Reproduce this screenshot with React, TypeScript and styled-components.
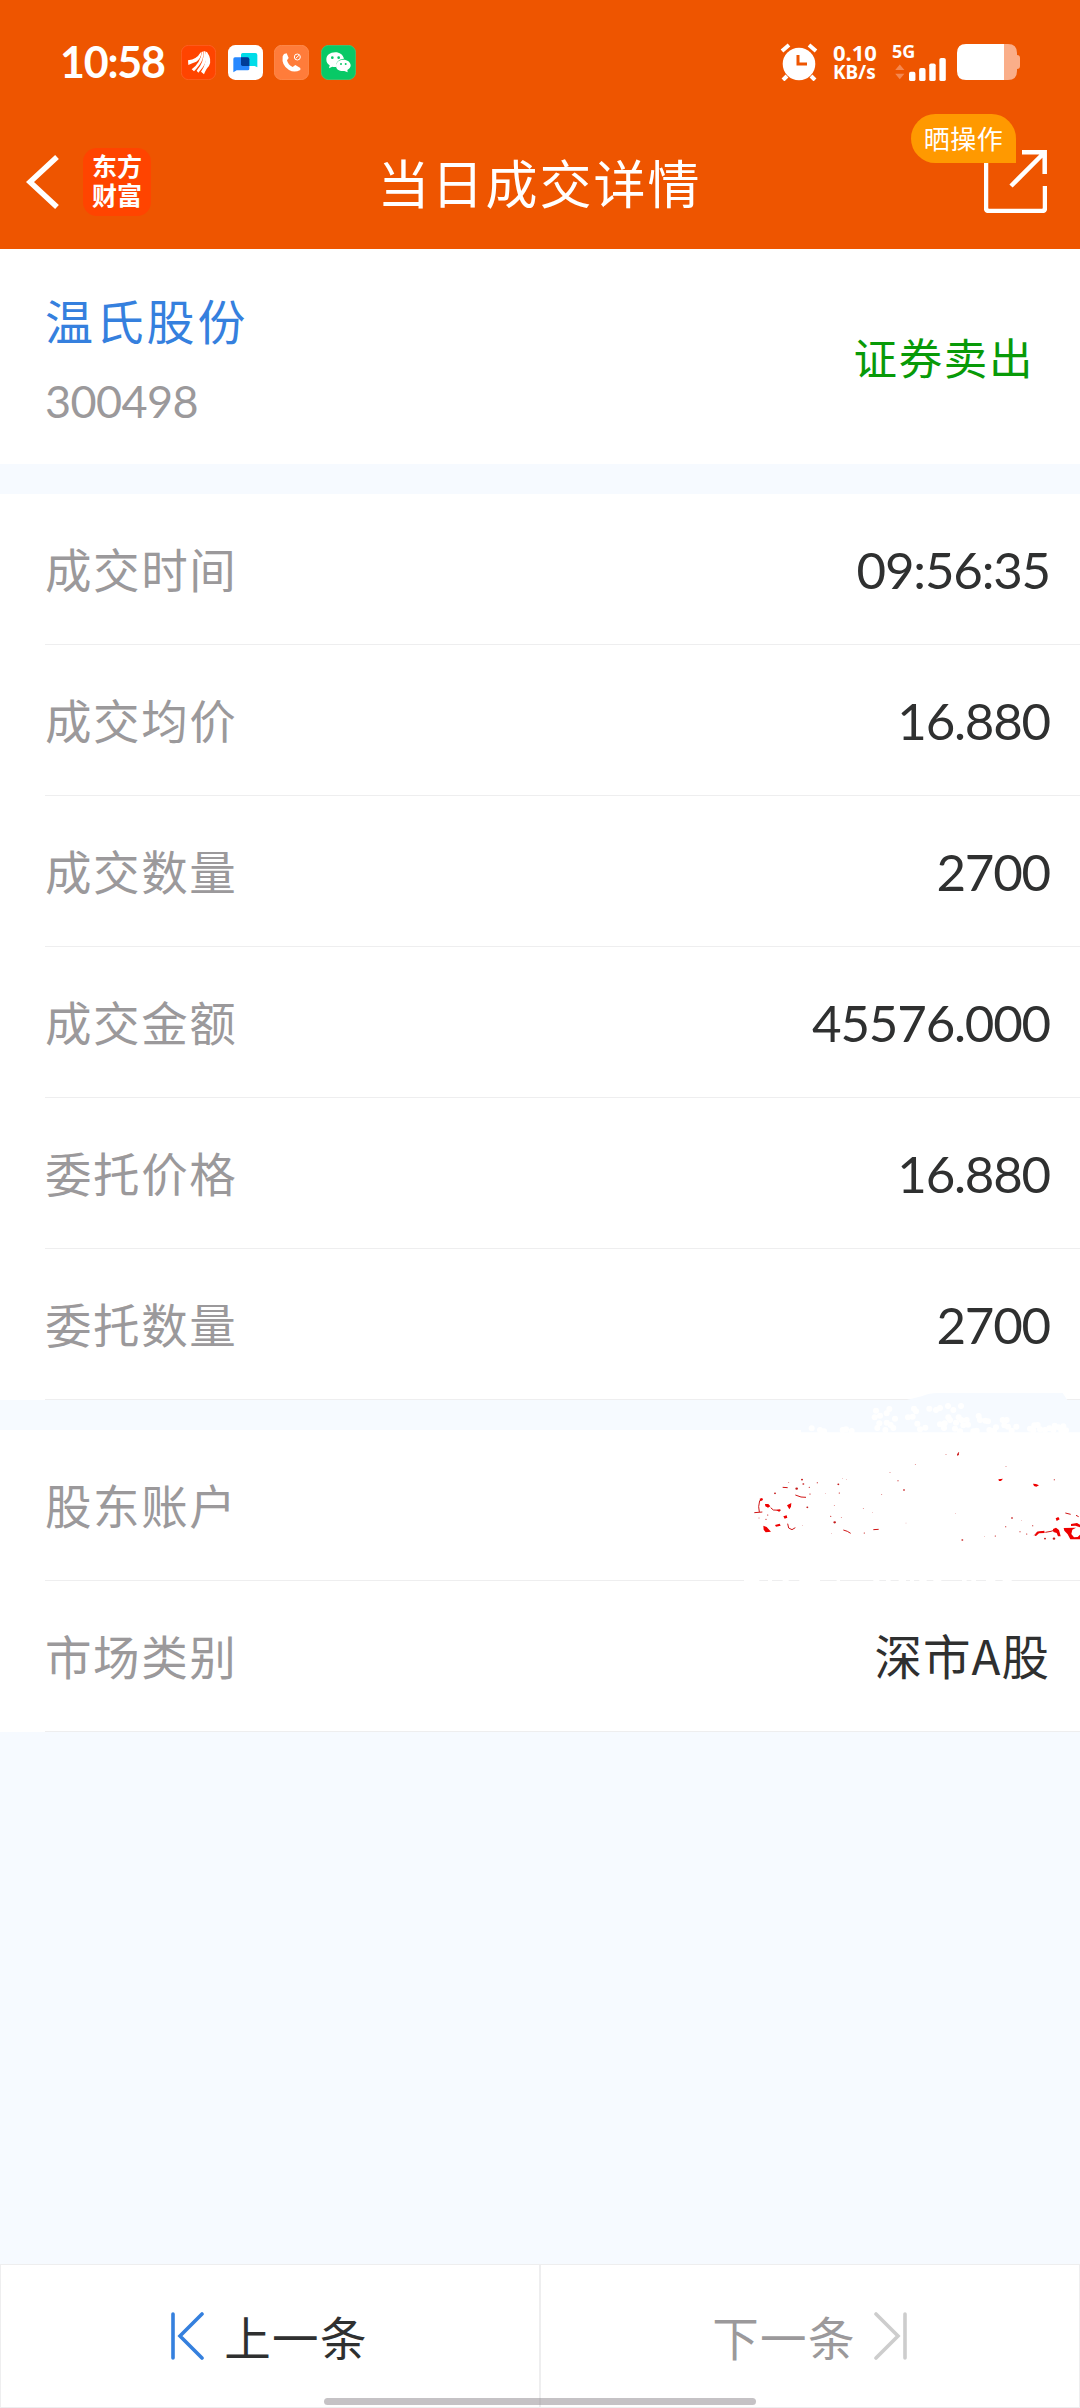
import React from 'react';
import styled, { createGlobalStyle } from 'styled-components';

const cjk = '"Noto Sans CJK SC", sans-serif';

const Global = createGlobalStyle`
  * { box-sizing: border-box; }
  body { margin: 0; background: #f6faff; }
`;

const Page = styled.div`
  position: relative;
  display: flex;
  flex-direction: column;
  width: 1080px;
  height: 2408px;
  background: #f6faff;
  font-family: Lato, ${cjk};
  color: #2f3030;
  overflow: hidden;
`;

const Header = styled.header`
  height: 249px;
  background: #ee5500;
  color: #fff;
`;

const StatusBar = styled.div`
  display: flex;
  align-items: center;
  height: 124px;
  padding: 0 60px 0 60px;
`;

const Clock = styled.div`
  width: 121px;
  font: 700 43px/50px Lato, sans-serif;
  letter-spacing: -1.2px;
  white-space: nowrap;
`;

const AppIcons = styled.div`
  display: flex;
  gap: 11.6px;
  flex: 1;
`;

const AppTile = styled.svg`
  display: block;
  width: 35px;
  height: 35px;
`;

const StatusRight = styled.div`
  display: flex;
  align-items: center;
`;

const NetSpeed = styled.div`
  width: 59px;
  padding-right: 10px;
  margin-left: 15px;
  font: 700 19px/20px "Noto Sans", sans-serif;

  &::first-line {
    font-size: 22px;
  }
`;

const Cell = styled.div`
  display: flex;
  flex-direction: column;
  width: 57px;
  height: 37px;
  margin-right: 8px;
  font: 700 18px/14px "Noto Sans", sans-serif;
`;

const NavBar = styled.div`
  display: grid;
  grid-template-columns: 1fr auto 1fr;
  align-items: center;
  height: 125px;
  padding: 0 33px 10px 26px;
`;

const NavLeft = styled.div`
  display: flex;
  align-items: center;
  gap: 24px;
`;

const Brand = styled.div`
  width: 68px;
  height: 68px;
  padding: 3px 9px;
  border-radius: 14px;
  background: #ff4400;
  font: 700 25px/29px ${cjk};
  word-break: break-all;
`;

const Title = styled.h1`
  margin: 0;
  padding-left: 6px;
  font: 400 52px/76px ${cjk};
  letter-spacing: 2px;
  white-space: nowrap;
`;

const Share = styled.div`
  position: relative;
  justify-self: end;
  width: 63px;
  height: 63px;
  margin-top: -1px;
`;

const ShareTag = styled.span`
  position: absolute;
  right: 31px;
  top: -36px;
  width: 105px;
  height: 49px;
  border-radius: 25px 25px 0 25px;
  background: #ff9900;
  font: 400 26px/47px ${cjk};
  text-align: center;
  letter-spacing: 0.5px;
  white-space: nowrap;
`;

const Summary = styled.section`
  display: flex;
  justify-content: space-between;
  align-items: center;
  height: 215px;
  padding: 0 46px 0 45px;
  background: #fff;
`;

const StockInfo = styled.div`
  padding-top: 7px;
`;

const StockName = styled.div`
  font: 400 48px/70px ${cjk};
  letter-spacing: 2.8px;
  color: #3580de;
`;

const StockCode = styled.div`
  margin-top: 12px;
  font: 400 45px/70px Lato, sans-serif;
  letter-spacing: -0.6px;
  color: #9b999b;
`;

const Side = styled.div`
  font: 400 43.5px/64px ${cjk};
  letter-spacing: 1.6px;
  color: #089a08;
`;

const Group = styled.section`
  margin-top: 30px;
  background: #fff;
`;

const Row = styled.div`
  display: flex;
  justify-content: space-between;
  align-items: center;
  height: 151px;
  padding-right: 30px;
  padding-left: 45px;
  background: linear-gradient(#eeeeef, #eeeeef) 45px 100% / 100% 1px no-repeat;
`;

const Label = styled.div`
  padding-bottom: 3px;
  font: 400 46.5px/70px ${cjk};
  letter-spacing: 1.6px;
  color: #9b999b;
`;

const Value = styled.div<{ $cjk?: boolean }>`
  padding-bottom: ${p => (p.$cjk ? 3 : 0)}px;
  font: 400 ${p => (p.$cjk ? 47.5 : 51)}px/70px ${p => (p.$cjk ? cjk : 'Lato, sans-serif')};
  letter-spacing: ${p => (p.$cjk ? 1 : -1.2)}px;
`;

const Footer = styled.footer`
  display: grid;
  grid-template-columns: 1fr 1fr;
  height: 144px;
  margin-top: auto;
`;

const PageButton = styled.button<{ $muted?: boolean }>`
  display: flex;
  align-items: center;
  justify-content: center;
  gap: ${p => (p.$muted ? 16 : 18)}px;
  padding: 0 ${p => (p.$muted ? 0 : 2)}px 0 0;
  border: 1px solid #eeeeef;
  background: #fff;
  color: ${p => (p.$muted ? '#9b999b' : '#2f3030')};
  font: 400 46.5px/70px ${cjk};
  letter-spacing: 1.4px;
`;

const HomeBar = styled.div`
  position: absolute;
  left: 324px;
  bottom: 3px;
  width: 432px;
  height: 7px;
  border-radius: 4px;
  background: rgba(140, 134, 140, 0.5);
`;

const Erasure = styled.svg`
  position: absolute;
  left: 700px;
  top: 1370px;
  pointer-events: none;
`;

const trade = [
  ['成交时间', '09:56:35'],
  ['成交均价', '16.880'],
  ['成交数量', '2700'],
  ['成交金额', '45576.000'],
  ['委托价格', '16.880'],
  ['委托数量', '2700'],
];

const blobs = [
  [335, 175], [360, 180], [372, 184], [428, 180], [438, 178], [455, 183], [528, 122], [524, 142], [540, 137], [568, 117], [560, 130],
  [538, 160], [532, 174], [560, 158], [585, 146], [572, 165], [580, 174], [556, 180], [642, 116], [648, 124], [624, 142], [638, 140],
  [652, 161], [660, 178], [676, 173], [688, 116], [708, 120], [720, 114], [744, 108], [760, 120], [783, 108], [745, 142], [750, 150],
  [720, 163], [734, 160], [732, 174], [768, 158], [776, 142], [784, 150], [800, 150], [790, 166], [804, 164], [765, 176], [780, 184],
  [836, 138], [840, 150], [856, 152], [864, 154], [830, 182], [820, 184], [868, 180], [888, 172], [882, 182], [908, 150], [920, 150],
  [913, 166], [924, 170], [949, 170], [935, 182], [990, 176], [1003, 166], [1013, 165], [1000, 181], [1020, 178], [1035, 180],
  [1048, 175], [1064, 167], [1060, 180], [1075, 172], [1090, 169], [1084, 182], [1098, 181],
];

const specks = [
  [306, 329, 3], [310, 342, 3], [328, 352, 2], [330, 372, 2], [352, 338, 2], [290, 356, 4], [322, 412, 3], [225, 370, 3], [203, 435, 2],
  [198, 448, 2], [404, 457, 4], [392, 439, 2], [424, 442, 1.5], [418, 369, 2], [415, 343, 3], [428, 325, 1], [439, 328, 1],
  [376, 371, 1], [403, 406, 1.5], [490, 415, 1.5], [493, 489, 2], [545, 374, 1.5], [517, 428, 1], [570, 308, 1.5], [594, 332, 2],
  [612, 360, 3], [646, 283, 1.5], [738, 254, 1.5], [774, 253, 3], [787, 510, 3], [767, 430, 1], [618, 459, 1], [918, 290, 1.5],
  [1063, 329, 2], [936, 444, 3], [917, 470, 2], [960, 485, 2], [886, 498, 2], [854, 499, 1], [980, 492, 2], [998, 467, 2],
  [964, 451, 1], [1035, 506, 3], [1062, 506, 4], [395, 491, 1], [177, 444, 1.5], [266, 338, 1.5], [307, 467, 1],
];

function AccountErasure() {
  return (
    <Erasure width="380" height="240" viewBox="0 0 1140 720">
      <path d="M280 190V180H300L620 90L665 79Q690 69 712 69H1088L1102 90H1140V189H280Z" fill="#f6faff" />
      <path d="M280 180H303V189H280Z" fill="#fff" />
      <path d="M280 187H1140V191H280Z" fill="#fff" />
      <g fill="#fff">{blobs.map(([x, y], i) => <circle key={i} cx={x} cy={y} r="9" />)}</g>
      <path d="M132 631h46M204 631h12M248 631h18M298 631h62M410 631h10M520 631h18M558 631h14M596 631h22M630 631h12M658 631h22M700 631h24M786 631h14M814 631h14M858 631h28M908 631h27" stroke="#fff" strokeWidth="5" />
      <g fill="#c51a1a">{specks.map(([x, y, r], i) => <ellipse key={i} cx={x} cy={y} rx={r} ry={r * 0.8} />)}</g>
      <g stroke="#d01414" strokeWidth="3" fill="none">
        <path d="M188 387L179 392L176 410L178 426M163 428L187 426M212 413L220 420L242 421M248 352L263 353M286 375L303 381L318 382M263 461L266 474L276 479L286 473M430 480L442 484L452 490M520 479L536 478M776 247L773 257M1003 496L1012 487L1030 485M1036 487L1053 484L1064 480M1096 429L1112 433M1128 436L1136 440" />
      </g>
      <g fill="#ee0000">
        <path d="M195 402L205 402L211 409L204 413L196 409ZM261 406L274 399L273 410L268 418ZM250 439L260 436L262 443L254 446ZM225 465L239 461L242 467L228 470ZM190 467L200 471L213 485L197 487L191 479ZM229 420L241 418L238 426ZM179 386L186 384L189 390L181 394Z" />
        <path d="M895 328L909 326L903 333L897 333ZM999 341L1008 342L1017 346L1009 350L1002 348ZM1067 445L1075 441L1079 448L1070 453ZM1004 497L1011 485L1033 482L1034 489L1017 490L1008 498ZM1059 477L1068 473L1077 480L1082 499L1074 499L1070 489L1060 486Z" />
        <path d="M1113 462L1131 459L1140 464V472L1126 467L1113 468ZM1091 474L1128 473L1117 479L1114 492L1122 502L1133 501L1140 494V508H1111L1103 493L1093 482Z" />
      </g>
    </Erasure>
  );
}

export default function App() {
  return (
    <Page>
      <Global />
      <Header>
        <StatusBar>
          <Clock>10:58</Clock>
          <AppIcons>
            <AppTile viewBox="0 0 105 105">
              <rect x="1" y="1" width="103" height="103" rx="22" fill="#ff4400" stroke="#ff6a30" strokeWidth="2" />
              <g fill="#fff">
                <path d="M21 46Q48 42 58 23L62 20Q60 40 46 50Q34 54 22 60Z" />
                <path d="M32 73Q58 54 63 21L67 19Q69 42 55 60Q46 72 39 79Z" />
                <path d="M47 77Q69 54 68 19L73 19Q81 46 66 66Q59 75 52 83Z" />
                <path d="M60 80Q79 53 74 20L78 21Q94 44 84 63Q76 70 69 88Z" />
              </g>
            </AppTile>
            <AppTile viewBox="0 0 105 105">
              <rect width="105" height="105" rx="22" fill="#fff" />
              <path d="M44 24H82Q88 24 88 30V67L80 63H39V29Q39 24 44 24Z" fill="#00dce8" />
              <path d="M21 37H58Q64 37 64 43V72Q64 76 59 76H26L16 82V42Q16 37 21 37Z" fill="#2688ff" />
              <path d="M39 37H58Q64 37 64 43V63H44Q39 63 39 58Z" fill="#003d96" />
            </AppTile>
            <AppTile viewBox="0 0 105 105">
              <rect x="1" y="1" width="103" height="103" rx="22" fill="#ff7c3a" stroke="#ff985f" strokeWidth="2" />
              <path d="M30 27L38 25L44 39L39 46Q42 60 56 66L64 60L79 69V75Q61 84 45 75Q22 62 26 34Z" fill="#fff" />
              <circle cx="70" cy="36" r="9" fill="none" stroke="#fff" strokeWidth="3" />
              <path d="M65 40L75 31" stroke="#fff" strokeWidth="3" />
            </AppTile>
            <AppTile viewBox="0 0 105 105">
              <rect x="1" y="1" width="103" height="103" rx="22" fill="#08c966" stroke="#3bd284" strokeWidth="2" />
              <path d="M43 22C27 22 16 31 16 44C16 51 20 57 26 61L24 70L34 65Q38 67 45 66C44 51 54 42 69 41C66 29 56 22 43 22Z" fill="#fff" />
              <path d="M67 44C54 44 45 52 45 62C45 73 56 80 70 78L80 82L79 75C85 72 89 67 89 61C89 51 79 44 67 44Z" fill="#fff" />
              <g fill="#08c966"><circle cx="34" cy="38" r="4" /><circle cx="53" cy="38" r="4" /><circle cx="60" cy="57" r="3" /><circle cx="74" cy="57" r="3" /></g>
            </AppTile>
          </AppIcons>
          <StatusRight>
            <svg width="38" height="38" viewBox="0 0 38 38" fill="none" stroke="#fff">
              <circle cx="19" cy="21" r="16.3" fill="#fff" stroke="none" />
              <path d="M2 8L9 2M29 2L36 8" strokeWidth="4" />
              <path d="M7 33L3 37M31 33L35 37" strokeWidth="4" />
              <path d="M18 12V21H27" stroke="#ee5500" strokeWidth="3" />
            </svg>
            <NetSpeed>0.10 KB/s</NetSpeed>
            <Cell>
              5G
              <svg width="57" height="25" viewBox="-1 0 57 25">
                <path d="M0 10L5 4L10 10ZM0 14L5 20L10 14Z" fill="#f58850" transform="translate(0 3)" />
                <g fill="#fff">
                  <rect x="15" y="15" width="7" height="10" rx="2" />
                  <rect x="26" y="11" width="7" height="14" rx="2" />
                  <rect x="37" y="6" width="7" height="19" rx="2" />
                  <rect x="48" y="0" width="7" height="25" rx="2" />
                </g>
              </svg>
            </Cell>
            <svg width="63" height="36" viewBox="0 0 63 36">
              <path d="M47 0H51Q60 0 60 9V11Q63 11 63 14V22Q63 25 60 25V27Q60 36 51 36H47Z" fill="#faae89" />
              <path d="M9 0H47V36H9Q0 36 0 27V9Q0 0 9 0Z" fill="#fff" />
            </svg>
          </StatusRight>
        </StatusBar>
        <NavBar>
          <NavLeft>
            <svg width="33" height="56" viewBox="0 0 33 56" fill="none" stroke="#fff" strokeWidth="5.5">
              <path d="M31 3L4 28L31 53" />
            </svg>
            <Brand>东方财富</Brand>
          </NavLeft>
          <Title>当日成交详情</Title>
          <Share>
            <svg width="63" height="63" viewBox="0 0 63 63" fill="none" stroke="#fff">
              <path d="M2 12V58Q2 61 5 61H58Q61 61 61 58V36" strokeWidth="4.5" />
              <path d="M38 2.3H60.7V24M60 3L27 36" strokeWidth="4.5" />
            </svg>
            <ShareTag>晒操作</ShareTag>
          </Share>
        </NavBar>
      </Header>
      <Summary>
        <StockInfo>
          <StockName>温氏股份</StockName>
          <StockCode>300498</StockCode>
        </StockInfo>
        <Side>证券卖出</Side>
      </Summary>
      <Group>
        {trade.map(([label, value]) => (
          <Row key={label}><Label>{label}</Label><Value>{value}</Value></Row>
        ))}
      </Group>
      <Group>
        <Row><Label>股东账户</Label></Row>
        <Row><Label>市场类别</Label><Value $cjk>深市A股</Value></Row>
      </Group>
      <Footer>
        <PageButton>
          <svg width="36" height="48" viewBox="0 0 36 48" fill="none" stroke="#3580de" strokeWidth="3.6" strokeLinecap="round">
            <path d="M3 2V46M32 2L10 24L32 46" />
          </svg>
          上一条
        </PageButton>
        <PageButton $muted>
          下一条
          <svg width="36" height="48" viewBox="0 0 36 48" fill="none" stroke="#cdcdcd" strokeWidth="3.6" strokeLinecap="round">
            <path d="M33 2V46M4 2L26 24L4 46" />
          </svg>
        </PageButton>
      </Footer>
      <AccountErasure />
      <HomeBar />
    </Page>
  );
}
